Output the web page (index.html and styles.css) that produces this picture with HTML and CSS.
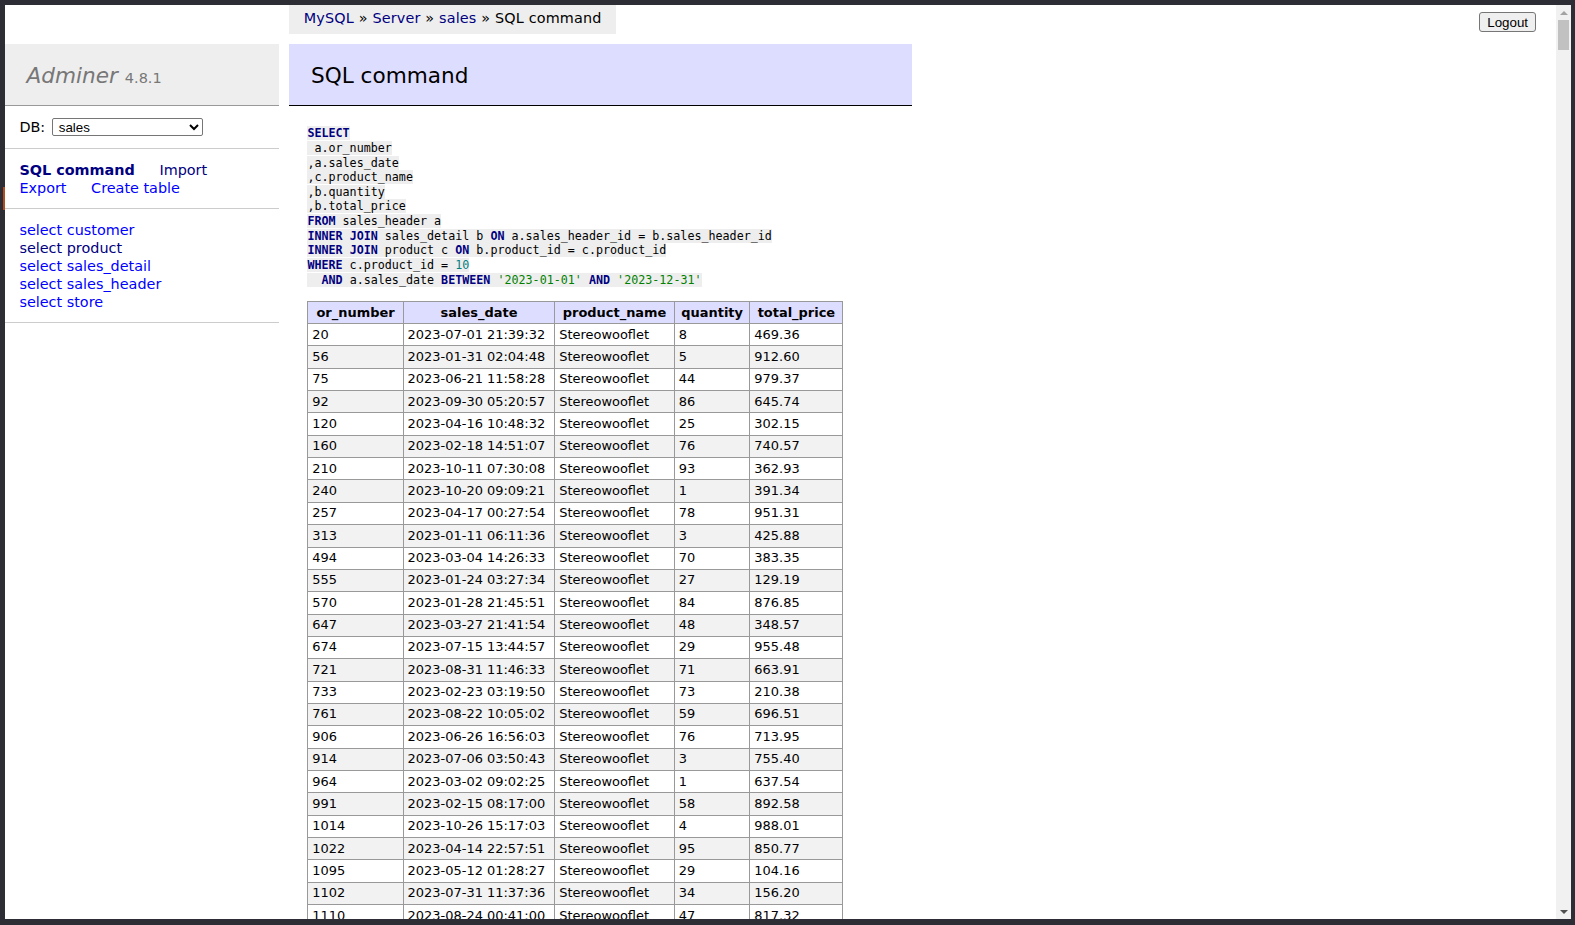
FILE: index.html
```html
<!DOCTYPE html>
<html lang="en">
<head>
<meta charset="utf-8">
<title>SQL command - sales - Adminer</title>
<link rel="stylesheet" href="styles.css">
</head>
<body>
<div class="frame">
  <div class="edge"><span class="edge-mark"></span></div>
  <div class="window">
    <div class="page">
      <div class="topbar">
        <p class="breadcrumb"><a href="#" class="visited">MySQL</a> » <a href="#" class="visited">Server</a> » <a href="#" class="visited">sales</a> » SQL command</p>
        <p class="logout"><button type="button" class="logout-btn">Logout</button></p>
      </div>
      <div class="layout">
        <div class="menu">
          <h1 class="brand"><a href="#" class="brand-name">Adminer</a> <span class="version">4.8.1</span></h1>
          <p class="menu-block dbs">DB: <select class="db-select"><option>sales</option><option>information_schema</option><option>performance_schema</option></select></p>
          <p class="menu-block links"><a href="#" class="active visited">SQL command</a> <a href="#" class="visited">Import</a> <a href="#">Export</a> <a href="#">Create table</a></p>
          <ul class="menu-block tables">
            <li><a href="#">select</a> <a href="#">customer</a></li>
            <li><a href="#" class="visited">select</a> <a href="#" class="visited">product</a></li>
            <li><a href="#">select</a> <a href="#">sales_detail</a></li>
            <li><a href="#">select</a> <a href="#">sales_header</a></li>
            <li><a href="#">select</a> <a href="#">store</a></li>
          </ul>
        </div>
        <div class="content">
          <h2 class="title">SQL command</h2>
<pre class="query"><code><b>SELECT</b>
 a.or_number
,a.sales_date
,c.product_name
,b.quantity
,b.total_price
<b>FROM</b> sales_header a
<b>INNER</b> <b>JOIN</b> sales_detail b <b>ON</b> a.sales_header_id = b.sales_header_id
<b>INNER</b> <b>JOIN</b> product c <b>ON</b> b.product_id = c.product_id
<b>WHERE</b> c.product_id = <span class="num">10</span>
  <b>AND</b> a.sales_date <b>BETWEEN</b> <span class="str">'2023-01-01'</span> <b>AND</b> <span class="str">'2023-12-31'</span></code></pre>
          <table class="result">
            <thead>
              <tr><th class="c1">or_number</th><th class="c2">sales_date</th><th class="c3">product_name</th><th class="c4">quantity</th><th class="c5">total_price</th></tr>
            </thead>
            <tbody>
              <tr><td>20</td><td>2023-07-01 21:39:32</td><td>Stereowooflet</td><td>8</td><td>469.36</td></tr>
              <tr><td>56</td><td>2023-01-31 02:04:48</td><td>Stereowooflet</td><td>5</td><td>912.60</td></tr>
              <tr><td>75</td><td>2023-06-21 11:58:28</td><td>Stereowooflet</td><td>44</td><td>979.37</td></tr>
              <tr><td>92</td><td>2023-09-30 05:20:57</td><td>Stereowooflet</td><td>86</td><td>645.74</td></tr>
              <tr><td>120</td><td>2023-04-16 10:48:32</td><td>Stereowooflet</td><td>25</td><td>302.15</td></tr>
              <tr><td>160</td><td>2023-02-18 14:51:07</td><td>Stereowooflet</td><td>76</td><td>740.57</td></tr>
              <tr><td>210</td><td>2023-10-11 07:30:08</td><td>Stereowooflet</td><td>93</td><td>362.93</td></tr>
              <tr><td>240</td><td>2023-10-20 09:09:21</td><td>Stereowooflet</td><td>1</td><td>391.34</td></tr>
              <tr><td>257</td><td>2023-04-17 00:27:54</td><td>Stereowooflet</td><td>78</td><td>951.31</td></tr>
              <tr><td>313</td><td>2023-01-11 06:11:36</td><td>Stereowooflet</td><td>3</td><td>425.88</td></tr>
              <tr><td>494</td><td>2023-03-04 14:26:33</td><td>Stereowooflet</td><td>70</td><td>383.35</td></tr>
              <tr><td>555</td><td>2023-01-24 03:27:34</td><td>Stereowooflet</td><td>27</td><td>129.19</td></tr>
              <tr><td>570</td><td>2023-01-28 21:45:51</td><td>Stereowooflet</td><td>84</td><td>876.85</td></tr>
              <tr><td>647</td><td>2023-03-27 21:41:54</td><td>Stereowooflet</td><td>48</td><td>348.57</td></tr>
              <tr><td>674</td><td>2023-07-15 13:44:57</td><td>Stereowooflet</td><td>29</td><td>955.48</td></tr>
              <tr><td>721</td><td>2023-08-31 11:46:33</td><td>Stereowooflet</td><td>71</td><td>663.91</td></tr>
              <tr><td>733</td><td>2023-02-23 03:19:50</td><td>Stereowooflet</td><td>73</td><td>210.38</td></tr>
              <tr><td>761</td><td>2023-08-22 10:05:02</td><td>Stereowooflet</td><td>59</td><td>696.51</td></tr>
              <tr><td>906</td><td>2023-06-26 16:56:03</td><td>Stereowooflet</td><td>76</td><td>713.95</td></tr>
              <tr><td>914</td><td>2023-07-06 03:50:43</td><td>Stereowooflet</td><td>3</td><td>755.40</td></tr>
              <tr><td>964</td><td>2023-03-02 09:02:25</td><td>Stereowooflet</td><td>1</td><td>637.54</td></tr>
              <tr><td>991</td><td>2023-02-15 08:17:00</td><td>Stereowooflet</td><td>58</td><td>892.58</td></tr>
              <tr><td>1014</td><td>2023-10-26 15:17:03</td><td>Stereowooflet</td><td>4</td><td>988.01</td></tr>
              <tr><td>1022</td><td>2023-04-14 22:57:51</td><td>Stereowooflet</td><td>95</td><td>850.77</td></tr>
              <tr><td>1095</td><td>2023-05-12 01:28:27</td><td>Stereowooflet</td><td>29</td><td>104.16</td></tr>
              <tr><td>1102</td><td>2023-07-31 11:37:36</td><td>Stereowooflet</td><td>34</td><td>156.20</td></tr>
              <tr><td>1110</td><td>2023-08-24 00:41:00</td><td>Stereowooflet</td><td>47</td><td>817.32</td></tr>
            </tbody>
          </table>
        </div>
      </div>
    </div>
    <div class="scrollbar">
      <div class="sb-btn"><span class="tri-up"></span></div>
      <div class="sb-thumb"></div>
      <div class="sb-track"></div>
      <div class="sb-btn"><span class="tri-down"></span></div>
    </div>
  </div>
</div>
</body>
</html>
```
FILE: styles.css
```css
html, body {
  margin: 0;
  padding: 0;
  background: #2d2d35;
}

.frame {
  display: flex;
  padding: 5px 4px 6px 0;
  width: 1575px;
  height: 925px;
  box-sizing: border-box;
}

.edge {
  width: 5px;
  flex: none;
}

.edge-mark {
  display: block;
  margin: 182px 0 0 3px;
  width: 2px;
  height: 23px;
  background: #b14d1c;
}

.window {
  display: flex;
  width: 1566px;
  height: 914px;
  background: #fff;
  overflow: hidden;
  flex: none;
}

.page {
  flex: 1;
  overflow: hidden;
  color: #000;
  font: 14.4px/1.25 "DejaVu Sans", Verdana, sans-serif;
}

a {
  color: #00f;
  text-decoration: none;
}

a.visited {
  color: navy;
}

/* top bar */
.topbar {
  display: flex;
  align-items: flex-start;
  height: 28.8px;
}

.breadcrumb {
  margin: 0 0 0 284.4px;
  padding: 1px 14.4px 0;
  height: 27.8px;
  line-height: 25.92px;
  background: #eee;
  white-space: nowrap;
  letter-spacing: 0.16px;
}

.logout {
  margin: 7.2px 20px 0 auto;
}

.logout-btn {
  display: block;
  height: 20px;
  padding: 0 7px;
  font: 13.33px "Liberation Sans", Arial, sans-serif;
  color: #000;
  background: #efefef;
  border: 1px solid #767676;
  border-radius: 3px;
}

/* main layout */
.layout {
  display: flex;
  align-items: flex-start;
  margin-top: 10px;
}

.menu {
  width: 273.6px;
  flex: none;
}

.brand {
  margin: 0;
  padding: 18.8px 21.6px 15.76px;
  font-size: 21.6px;
  line-height: 1.25;
  font-weight: normal;
  color: #777;
  background: #eee;
  border-bottom: 1px solid #999;
}

.brand-name {
  color: #777;
  font-style: italic;
}

.version {
  font-size: 67%;
  color: #777;
}

.menu-block {
  margin: 0;
  padding: 12.3px 14.4px 10.74px;
  border-bottom: 1px solid #ccc;
}

.dbs {
  height: 18.2px;
  padding-top: 11.52px;
  padding-bottom: 11.52px;
  display: flex;
  align-items: center;
}

.db-select {
  margin-left: 6.6px;
  width: 151px;
  height: 18px;
  padding: 0 0 0 2px;
  font: 13.33px "Liberation Sans", Arial, sans-serif;
  color: #000;
  background: #fff;
  border: 1px solid #767676;
  border-radius: 2px;
}

.links a {
  margin-right: 20px;
  white-space: nowrap;
}

.links .active {
  font-weight: bold;
}

.tables {
  list-style: none;
  white-space: nowrap;
}

/* content */
.content {
  margin-left: 28.8px;
  width: 604.6px;
  padding: 0 20px 20px 0;
}

.title {
  margin: 0 0 20px -18px;
  padding: 18.8px 21.6px 15.76px;
  font-size: 21.6px;
  line-height: 1.25;
  font-weight: normal;
  color: #000;
  background: #ddf;
  border-bottom: 1px solid #000;
}

.query {
  margin: 11.7px 0 0;
  font: 11.7px/14.625px "DejaVu Sans Mono", monospace;
}

.query code {
  background: #eee;
  font: inherit;
}

.query b {
  color: navy;
  font-weight: bold;
}

.query .num {
  color: #007f7f;
}

.query .str {
  color: green;
}

.result {
  margin: 13.5px 20px 0 0;
  border-collapse: collapse;
  font-size: 12.96px;
  white-space: nowrap;
}

.result td,
.result th {
  border: 1px solid #999;
  padding: 2.592px 3.888px;
  text-align: left;
  font-weight: normal;
}

.result thead th {
  background: #ddf;
  font-weight: bold;
  text-align: center;
  padding: 3.1px 6.48px 2.08px;
}

.result tbody tr:nth-child(2n) {
  background: #f2f2f2;
}

.c1 { width: 81.4px; }
.c2 { width: 137.7px; }
.c3 { width: 105.5px; }
.c4 { width: 61.4px; }
.c5 { width: 79px; }

/* scrollbar */
.scrollbar {
  width: 15px;
  flex: none;
  display: flex;
  flex-direction: column;
  background: #f1f1f1;
}

.sb-btn {
  height: 15px;
  display: flex;
  align-items: center;
  justify-content: center;
  flex: none;
}

.tri-up {
  width: 0;
  height: 0;
  border-left: 4px solid transparent;
  border-right: 4px solid transparent;
  border-bottom: 4px solid #a3a3a3;
}

.tri-down {
  width: 0;
  height: 0;
  border-left: 4px solid transparent;
  border-right: 4px solid transparent;
  border-top: 4px solid #505050;
}

.sb-thumb {
  height: 30px;
  margin: 0 2px;
  background: #c1c1c1;
  flex: none;
}

.sb-track {
  flex: 1;
}
```
